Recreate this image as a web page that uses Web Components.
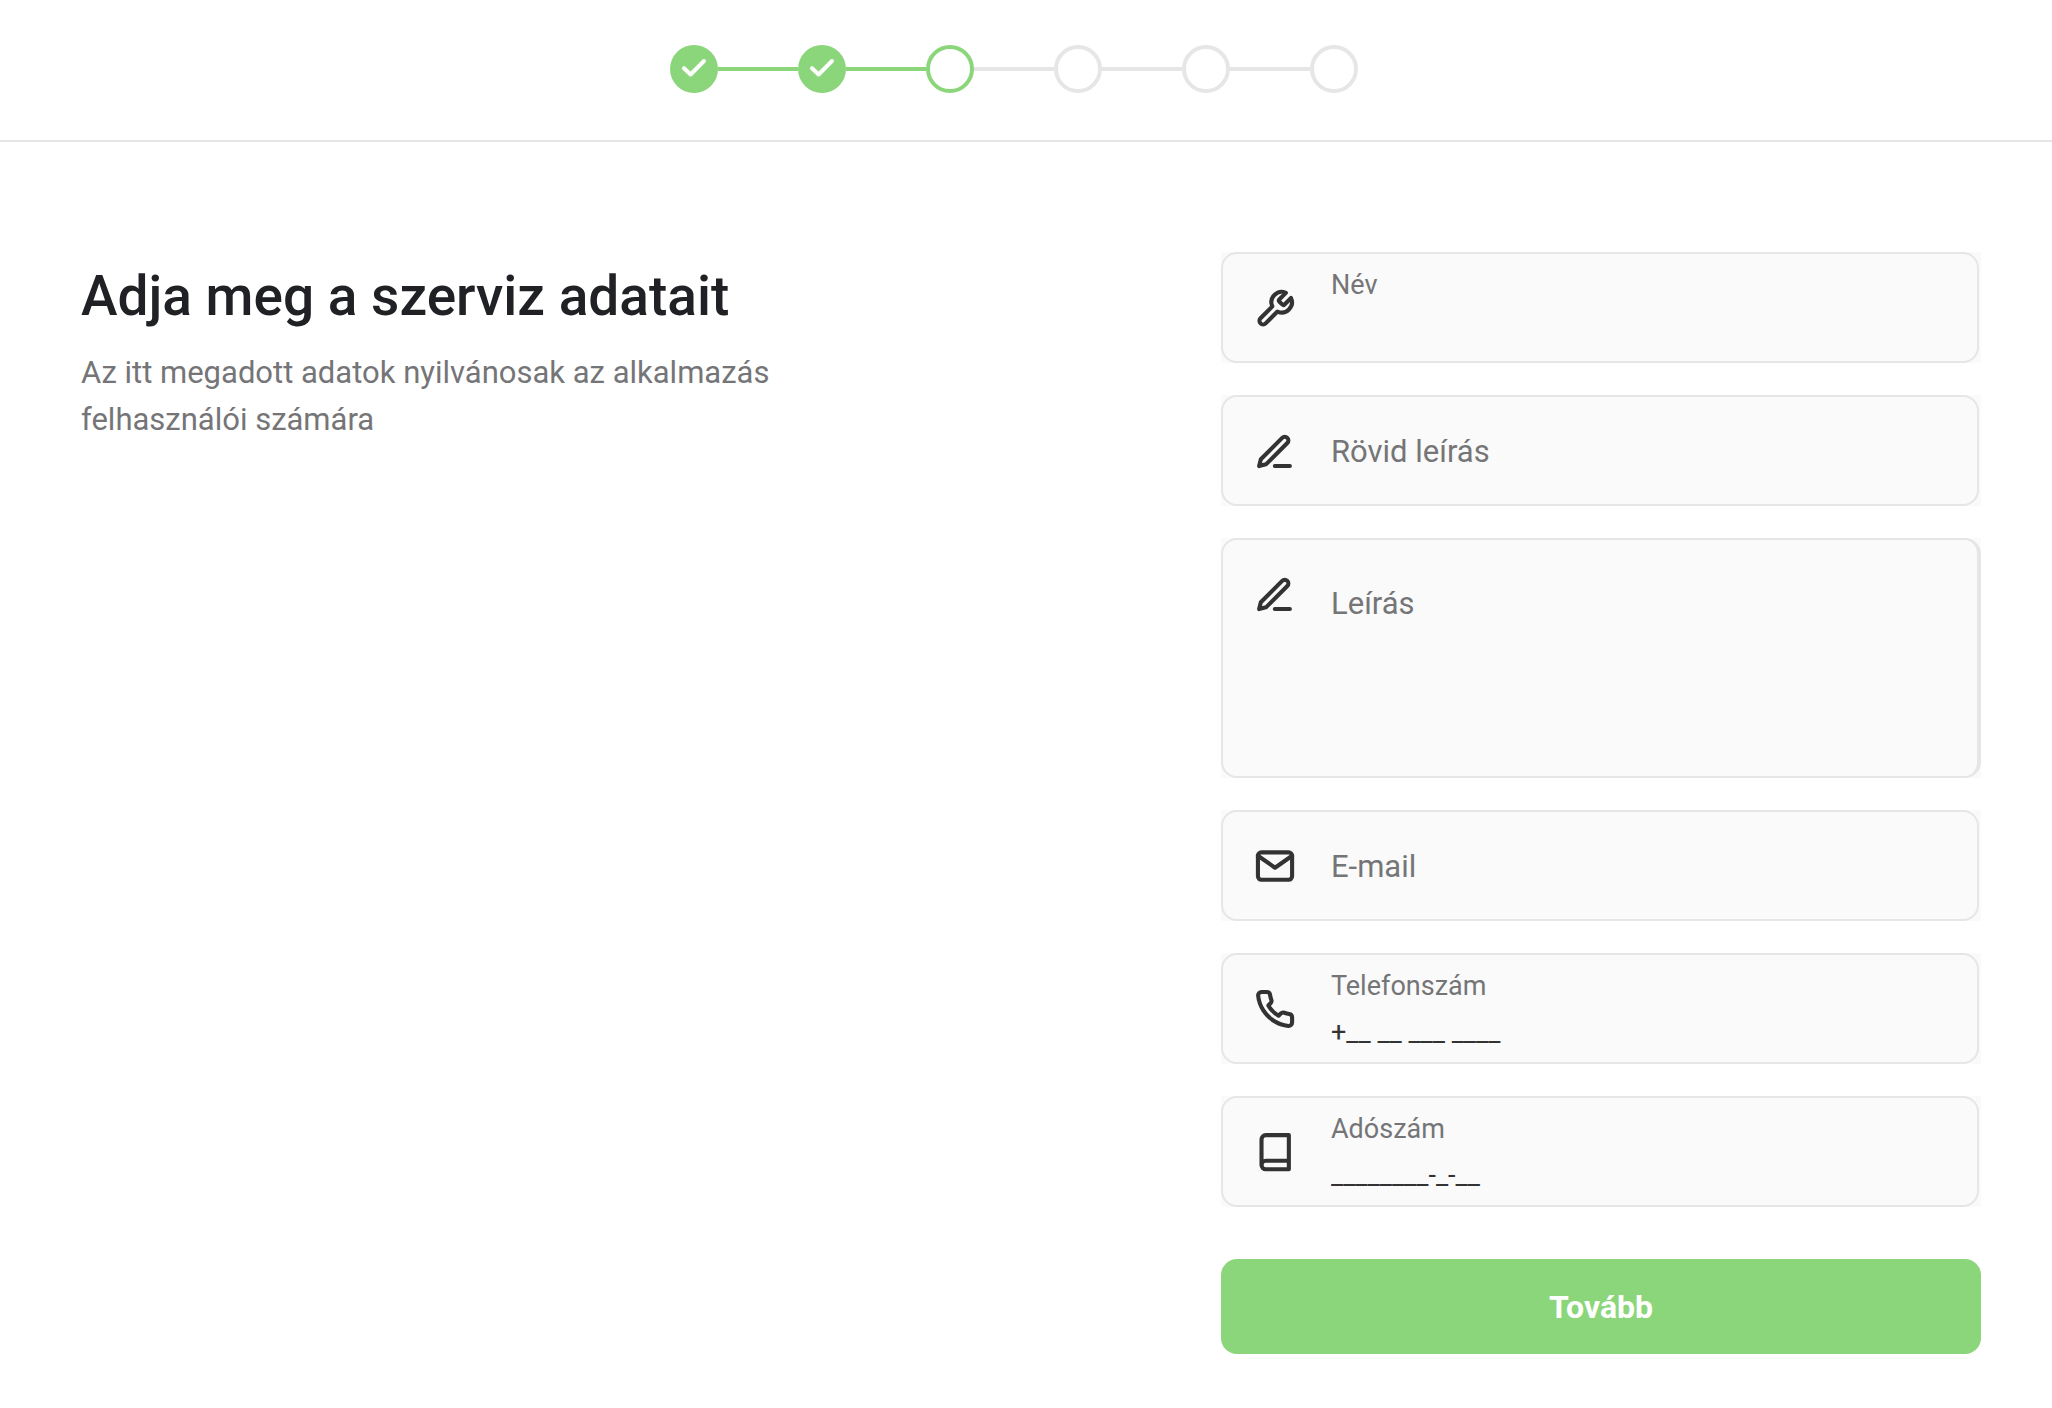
<!DOCTYPE html>
<html lang="hu">
<head>
<meta charset="utf-8">
<meta name="viewport" content="width=device-width, initial-scale=1">
<title>Adja meg a szerviz adatait</title>
<style>
:root {
	--green: #8bd67b;
	--line: #e6e6e6;
	--surface: #fafafa;
	--ink: #333333;
	--muted: #757578;
	--heading: #202125;
}
body {
	margin: 0;
	background: white;
	color: var(--ink);
	font-family: Roboto, "Liberation Sans", sans-serif;
}
</style>
</head>
<body>
<service-page>
	<step-progress slot="progress" total="6" current="3"></step-progress>
	<page-intro slot="intro">
		<span slot="title">Adja meg a szerviz adatait</span>
		<span slot="text">Az itt megadott adatok nyilvánosak az alkalmazás felhasználói számára</span>
	</page-intro>
	<form-field icon="wrench" label="Név" floated></form-field>
	<form-field icon="pen" label="Rövid leírás"></form-field>
	<form-field icon="pen" label="Leírás" multiline></form-field>
	<form-field icon="mail" label="E-mail" type="email"></form-field>
	<form-field icon="phone" label="Telefonszám" type="tel" value="+__ __ ___ ____" floated></form-field>
	<form-field icon="book" label="Adószám" value="________-_-__" floated></form-field>
	<submit-button>Tovább</submit-button>
</service-page>

<script>
const icons = {
	wrench: `<path transform="translate(.2 .9)" d="M14.7 6.3a1 1 0 0 0 0 1.4l1.6 1.6a1 1 0 0 0 1.4 0l3.77-3.77a6 6 0 0 1-7.94 7.94l-6.91 6.91a2.12 2.12 0 0 1-3-3l6.91-6.91a6 6 0 0 1 7.94-7.94l-3.76 3.76z"/>`,
	pen: `<path d="M12.2 21.1h8.8M16.5 4.6a2.12 2.12 0 0 1 3 3L7 20.1l-4 1 1-4z"/>`,
	mail: `<g transform="translate(.3 .3)"><rect x="2" y="4" width="20" height="16" rx="2"/><path d="M22 6l-10 7L2 6"/></g>`,
	phone: `<path transform="translate(.3 .3)" d="M22 16.92v3a2 2 0 0 1-2.18 2 19.79 19.79 0 0 1-8.63-3.07 19.5 19.5 0 0 1-6-6 19.79 19.79 0 0 1-3.07-8.67A2 2 0 0 1 4.11 2h3a2 2 0 0 1 2 1.72 12.84 12.84 0 0 0 .7 2.81 2 2 0 0 1-.45 2.11L8.09 9.91a16 16 0 0 0 6 6l1.27-1.27a2 2 0 0 1 2.11-.45 12.84 12.84 0 0 0 2.81.7A2 2 0 0 1 22 16.92z"/>`,
	book: `<path transform="translate(.4 .4)" d="M4 19.5A2.5 2.5 0 0 1 6.5 17H20M6.5 2H20v20H6.5A2.5 2.5 0 0 1 4 19.5v-15A2.5 2.5 0 0 1 6.5 2z"/>`
}

class ServicePage extends HTMLElement {
	constructor() {
		super()
		this.attachShadow({ mode: "open" })
		this.shadowRoot.innerHTML = `
		<header><slot name='progress'></slot></header>
		<main>
			<slot name='intro'></slot>
			<form><slot></slot></form>
		</main>
		<style>
		:host {
			display: block;
		}
		header {
			padding: 45px 24px 47px 0;
			border-bottom: 2px solid var(--line);
		}
		main {
			display: grid;
			grid-template-columns: 3fr 2fr;
			align-items: start;
			padding: 110px 71px 54px 81px;
		}
		form {
			display: flex;
			flex-direction: column;
			gap: 32px;
		}
		</style>
		`
	}
}

class StepProgress extends HTMLElement {
	constructor() {
		super()
		this.attachShadow({ mode: "open" })
	}
	connectedCallback() {
		const total = Number(this.getAttribute("total"))
		const current = Number(this.getAttribute("current"))
		let items = ""
		for(let i = 1; i <= total; i++) {
			const state = i < current ? "done" : i === current ? "current" : ""
			const check = i < current ? "<svg viewBox='0 0 48 48' aria-hidden='true'><path d='M14 23.2l6.6 6.3L34 16'/></svg>" : ""
			items += `<li class='${state}'><span>${check}</span></li>`
		}
		this.shadowRoot.innerHTML = `
		<ol>${items}</ol>
		<style>
		:host {
			display: block;
		}
		ol {
			display: flex;
			justify-content: center;
			margin: 0;
			padding: 0;
			list-style: none;
		}
		li {
			display: flex;
			align-items: center;
		}
		/* connector to the previous step */
		li + li::before {
			content: "";
			width: 80px;
			height: 4px;
			background: var(--line);
		}
		li.done::before, li.current::before {
			background: var(--green);
		}
		span {
			box-sizing: border-box;
			width: 48px;
			height: 48px;
			border: 4px solid var(--line);
			border-radius: 50%;
		}
		.current span {
			border-color: var(--green);
		}
		.done span {
			border: 0;
			background: var(--green);
		}
		svg {
			display: block;
			fill: none;
			stroke: white;
			stroke-width: 4;
			stroke-linecap: round;
			stroke-linejoin: round;
		}
		</style>
		`
	}
}

class PageIntro extends HTMLElement {
	constructor() {
		super()
		this.attachShadow({ mode: "open" })
		this.shadowRoot.innerHTML = `
		<h1><slot name='title'></slot></h1>
		<p><slot name='text'></slot></p>
		<style>
		:host {
			display: block;
			max-width: 760px;
			padding-top: 12px;
		}
		h1 {
			margin: 0 0 21px;
			color: var(--heading);
			font-size: 55px;
			font-weight: 500;
			line-height: 64px;
		}
		p {
			margin: 0;
			color: var(--muted);
			font-size: 31px;
			line-height: 47px;
		}
		</style>
		`
	}
}

class FormField extends HTMLElement {
	constructor() {
		super()
		this.attachShadow({ mode: "open" })
	}
	connectedCallback() {
		const type = this.getAttribute("type") || "text"
		const control = this.hasAttribute("multiline")
			? "<textarea id='control'></textarea>"
			: `<input id='control' type='${type}' value='${this.getAttribute("value") || ""}'>`
		this.shadowRoot.innerHTML = `
		<div id='frame'>
			<svg viewBox='0 0 24 24' aria-hidden='true'>${icons[this.getAttribute("icon")]}</svg>
			<div id='body'>
				<label for='control'>${this.getAttribute("label")}</label>
				${control}
			</div>
		</div>
		<style>
		:host {
			display: block;
			background: var(--surface);
		}
		#frame {
			box-sizing: border-box;
			display: flex;
			align-items: flex-start;
			gap: 36px;
			height: 111px;
			margin-right: 2px;
			padding-left: 31px;
			border: 2px solid var(--line);
			border-radius: 16px;
		}
		svg {
			flex: none;
			width: 41px;
			height: 41px;
			margin-top: 33px;
			fill: none;
			stroke: var(--ink);
			stroke-width: 2.4;
			stroke-linecap: round;
			stroke-linejoin: round;
		}
		#body {
			flex: 1;
			display: grid;
			height: 100%;
		}
		/* label rests on top of the empty control */
		label, input, textarea {
			grid-area: 1 / 1;
		}
		label {
			z-index: 1;
			color: var(--muted);
			font-size: 31px;
			line-height: 109px;
			pointer-events: none;
		}
		input, textarea {
			box-sizing: border-box;
			width: 100%;
			margin: 0;
			padding: 0;
			border: 0;
			outline: 0;
			background: none;
			color: var(--ink);
			font: 27px/40px Roboto, "Liberation Sans", sans-serif;
			resize: none;
		}
		:host([floated]) #body {
			grid-template-rows: 32px 60px;
			padding-top: 15px;
			box-sizing: border-box;
		}
		:host([floated]) label {
			font-size: 27px;
			line-height: 32px;
		}
		:host([floated]) input {
			grid-area: 2 / 1;
		}
		:host([multiline]) #frame {
			height: 240px;
			margin-right: 0;
			border-right-width: 4px;
		}
		:host([multiline]) label {
			padding-top: 9px;
		}
		:host([multiline]) textarea {
			padding-top: 44px;
		}
		</style>
		`
	}
}

class SubmitButton extends HTMLElement {
	constructor() {
		super()
		this.attachShadow({ mode: "open" })
		this.shadowRoot.innerHTML = `
		<button type='button'><slot></slot></button>
		<style>
		:host {
			display: block;
			padding-top: 20px;
		}
		button {
			display: block;
			width: 100%;
			height: 95px;
			padding: 0;
			border: 0;
			border-radius: 16px;
			background: var(--green);
			color: white;
			font: bold 32px Roboto, "Liberation Sans", sans-serif;
		}
		button:hover {
			cursor: pointer;
		}
		</style>
		`
	}
}

customElements.define("service-page", ServicePage)
customElements.define("step-progress", StepProgress)
customElements.define("page-intro", PageIntro)
customElements.define("form-field", FormField)
customElements.define("submit-button", SubmitButton)
</script>
</body>
</html>
